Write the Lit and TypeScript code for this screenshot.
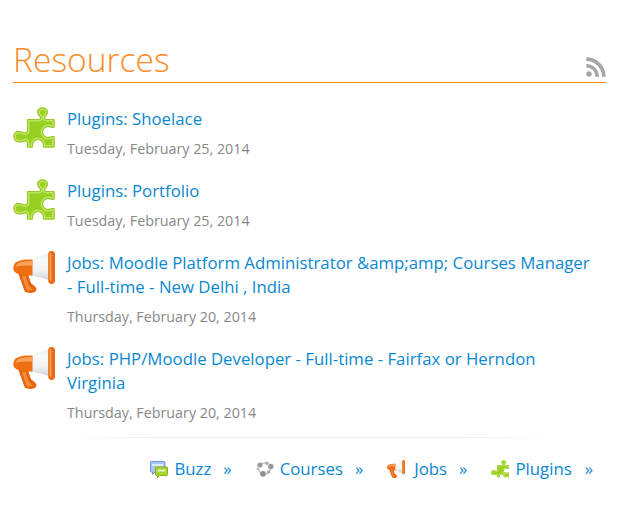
import { LitElement, html, css, svg } from "lit";
import { customElement } from "lit/decorators.js";

const PUZZLE = "M15.5 12H25.5C27.5 12 27.5 10.5 26.5 9.5C25 8 24.2 6.5 24.2 5C24.2 2.2 26.5 .5 29.5 .5C32.5 .5 34.8 2.2 34.8 5C34.8 6.5 34 8 32.5 9.5C31.5 10.5 31.5 12 33.5 12H40C41 12 41.5 12.5 41.5 13.5V19.5C41.5 21 40.3 21.2 39.2 21C38 20.3 36.5 20 35 20C32.2 20 30 22.2 30 25C30 27.8 32.2 30 35 30C36.5 30 38 29.7 39.2 29C40.3 28.8 41.5 29 41.5 30.5V39C41.5 40 41 40.5 40 40.5H31.5C30.2 40.5 29.6 39.8 29.9 38.8C30 38.2 30 38 30 38C30 35.2 27.8 33 25 33C22.2 33 20 35.2 20 38C20 38.2 20 38.4 20.1 38.8C20.4 39.8 19.8 40.5 18.5 40.5H15.5C14.5 40.5 14 40 14 39V36C14 34 12.5 33.8 11.5 34.5C10 35.5 7 35.2 5.5 35.2C2.5 35.2 .5 32.5 .5 29.5C.5 26.5 2.5 24 5.5 24C7 24 8.5 24.5 10.5 25.2C12 26 14 25.5 14 24V13.5C14 12.5 14.5 12 15.5 12Z";

function puzzle(size: number) {
  return svg`<svg width=${size} height=${size} viewBox="0 0 42 42">
    <defs><clipPath id="pz"><path d=${PUZZLE}/></clipPath></defs>
    <path d=${PUZZLE} fill="#97d021"/>
    <g clip-path="url(#pz)" fill="none">
      <path d=${PUZZLE} stroke="#bde55f" stroke-width="5"/>
      <path d=${PUZZLE} stroke="#98c628" stroke-width="2"/>
    </g>
  </svg>`;
}

function horn(size: number) {
  return svg`<svg width=${size} height=${size} viewBox="0 0 42 42">
    <defs><linearGradient id="cone" x1="0" y1="0" x2="0" y2="1">
      <stop offset="0" stop-color="#e8e8e8"/><stop offset=".25" stop-color="#fafafa"/><stop offset=".65" stop-color="#f2f2f2"/><stop offset="1" stop-color="#d4d4d4"/>
    </linearGradient></defs>
    <path d="M5.5 23L15 23L17.5 31C19 34 23 35 23.5 38C23.5 41 20 42 17 42L12 41C10 36 8 30 5.5 23Z" fill="#e8650f"/>
    <path d="M9 25H13L15 33C16 36 18.5 37 20 38.5C17.5 40 14.5 39.5 13.5 38.5C12 34 10.5 30 9 25Z" fill="#f58a3c"/>
    <path d="M19 8.5L36 2V29L19 24.5Z" fill="url(#cone)"/>
    <path d="M19.5 8.5C7 8.5 .3 10 .3 17C.3 23 7 24.5 19.5 24.5Z" fill="#ee7012"/>
    <path d="M19.5 10C10 10 3 11.5 2.5 16C6 14.5 12 14.5 19.5 14.5Z" fill="#f8a25e"/>
    <rect x="35.2" y="0" width="6.8" height="33" rx="3.4" fill="#e96b10"/>
    <rect x="36.6" y="2" width="1.8" height="28" rx=".9" fill="#f8a25e"/>
  </svg>`;
}

function buzz() {
  return svg`<svg width="18" height="17" viewBox="0 0 18 17">
    <path d="M1 .5H14C14.6 .5 15 .9 15 1.5V10C15 10.6 14.6 11 14 11H5L2.5 13.5V11H1C.5 11 .5 10.6 .5 10V1.5C.5 .9 .5 .5 1 .5Z" fill="#a9c6f2" stroke="#6f9de0"/>
    <rect x="2" y="3" width="11" height="2" fill="#dfeafb"/>
    <path d="M6 6H17C17.5 6 17.5 6.4 17.5 7V13.5C17.5 14 17.5 14.5 17 14.5H9.5L7.5 16.5V14.5H6C5.5 14.5 5.5 14 5.5 13.5V7C5.5 6.4 5.5 6 6 6Z" fill="#a4d52a" stroke="#8ab51f"/>
    <rect x="7.5" y="8.5" width="8" height="2" fill="#eaf6c8"/>
  </svg>`;
}

function courses() {
  return svg`<svg width="18" height="16" viewBox="0 0 18 16">
    <path d="M5 3.5A7 7 0 0 1 12 2.5M2.5 7A7 7 0 0 0 5 12.5M14.5 8A7 7 0 0 1 10 13" fill="none" stroke="#b5b5b5" stroke-width="1.2"/>
    <circle cx="4" cy="4" r="2.6" fill="#9a9a9a"/>
    <circle cx="11" cy="2.2" r="1.7" fill="#aaa"/>
    <circle cx="14.8" cy="5.5" r="2.7" fill="#999"/>
    <circle cx="7" cy="12.8" r="2.9" fill="#8f8f8f"/>
    <circle cx="1.8" cy="8" r="1.3" fill="#bbb"/>
    <circle cx="12.5" cy="11" r="1.6" fill="#a5a5a5"/>
  </svg>`;
}

@customElement("app-root")
export class AppRoot extends LitElement {
  static styles = css`
    :host {
      display: block;
      width: 619px;
      height: 509px;
      background: #fff;
      font-family: "Open Sans", sans-serif;
      box-sizing: border-box;
      padding: 38px 13px 0 13px;
      overflow: hidden;
    }
    .head {
      display: flex;
      justify-content: space-between;
      align-items: flex-end;
      height: 44px;
      border-bottom: 1px solid #ff8800;
      margin-bottom: 24px;
    }
    h2 {
      margin: 0 0 1px;
      font-size: 33.6px;
      font-weight: 300;
      line-height: 43px;
      color: #fb8c28;
    }
    .rss {
      display: block;
      margin-bottom: 5px;
    }
    .list {
      display: flex;
      flex-direction: column;
      gap: 20px;
      margin-bottom: 14px;
    }
    .item {
      display: flex;
      align-items: flex-start;
      gap: 12px;
    }
    .ic {
      flex: 0 0 42px;
      height: 42px;
    }
    .ic svg { display: block; }
    .t { flex: 1; min-width: 0; padding-right: 12px; }
    a {
      color: #0a88d0;
      text-decoration: none;
    }
    .title {
      display: block;
      font-size: 16.8px;
      line-height: 24px;
    }
    .date {
      font-size: 14.3px;
      line-height: 20px;
      margin-top: 8px;
      color: #888;
    }
    .rule {
      height: 1px;
      margin: 0 45px;
      background: linear-gradient(to right, #fff, #eee 20%, #eee 80%, #fff);
    }
    .links {
      display: flex;
      justify-content: flex-end;
      gap: 24px;
      padding: 19px 13px 0 0;
      font-size: 16.8px;
      line-height: 24px;
    }
    .links a {
      display: flex;
      align-items: center;
      gap: 6px;
    }
    .links a.wide span:first-of-type { margin-left: 3px; }
    .links svg { display: block; }
    .arrow { margin-left: 6px; }
    .links a:last-child .arrow { margin-left: 7px; }
  `;

  private items = [
    { icon: "p", t: "Plugins: Shoelace", d: "Tuesday, February 25, 2014" },
    { icon: "p", t: "Plugins: Portfolio", d: "Tuesday, February 25, 2014" },
    { icon: "h", t: "Jobs: Moodle Platform Administrator &amp;amp; Courses Manager - Full-time - New Delhi , India", d: "Thursday, February 20, 2014" },
    { icon: "h", t: "Jobs: PHP/Moodle Developer - Full-time - Fairfax or Herndon Virginia", d: "Thursday, February 20, 2014" },
  ];

  render() {
    return html`
      <div class="head">
        <h2>Resources</h2>
        <svg class="rss" width="20" height="20" viewBox="0 0 20 20" fill="#a6a6a6">
          <circle cx="3" cy="17" r="2.7"/>
          <path d="M.3 7V10.6C5.6 10.6 9.4 14.4 9.4 19.7H13C13 12.6 7.4 7 .3 7Z"/>
          <path d="M.3 .3V4C9 4 16 11 16 19.7H19.7C19.7 9 11 .3 .3 .3Z"/>
        </svg>
      </div>
      <div class="list">
        ${this.items.map(
          (i) => html`
            <div class="item">
              <div class="ic">${i.icon === "p" ? puzzle(42) : horn(42)}</div>
              <div class="t">
                <a class="title" href="#">${i.t}</a>
                <div class="date">${i.d}</div>
              </div>
            </div>
          `
        )}
      </div>
      <div class="rule"></div>
      <div class="links">
        <a href="#">${buzz()}<span>Buzz</span><span class="arrow">»</span></a>
        <a href="#">${courses()}<span>Courses</span><span class="arrow">»</span></a>
        <a class="wide" href="#">${horn(18)}<span>Jobs</span><span class="arrow">»</span></a>
        <a href="#">${puzzle(18)}<span>Plugins</span><span class="arrow">»</span></a>
      </div>
    `;
  }
}
